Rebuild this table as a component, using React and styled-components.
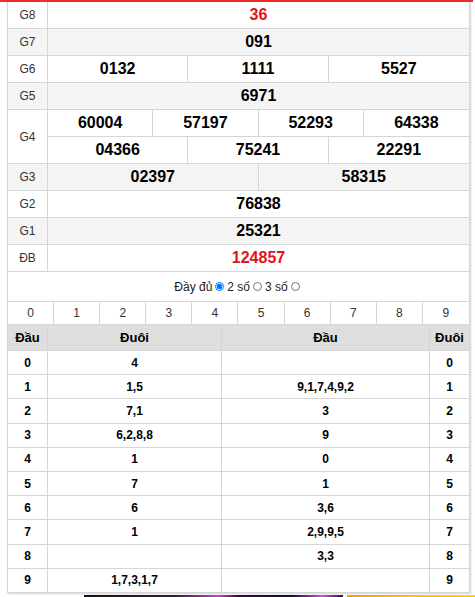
import React from 'react';
import styled, { createGlobalStyle } from 'styled-components';

const GlobalStyle = createGlobalStyle`
  html, body { margin: 0; padding: 0; background: #fff; }
  body { font-family: Arial, "Liberation Sans", Helvetica, sans-serif; color: #000; }
`;

const line = '#d6d6d6';

const TopBar = styled.div`
  height: 2px;
  margin-right: 2px;
  background: #ee2a2a;`

const Card = styled.div`
  margin-left: 7px;
  width: 463px;
  box-sizing: border-box;
  border-left: 1px solid ${line};
  border-right: 1px solid ${line};
  box-shadow: 1px 1px 2px rgba(0, 0, 0, 0.18);`

const Prizes = styled.div`
  display: grid;
  grid-template-columns: 40px 1fr;`

const Label = styled.div`
  grid-row: span ${p => p.$span || 1};
  display: flex;
  align-items: center;
  justify-content: center;
  background: ${p => (p.$alt ? '#f4f4f4' : '#fff')};
  border-right: 1px solid ${line};
  border-bottom: 1px solid ${line};
  font-size: 12px;
  color: #333;`

const ValueRow = styled.div`
  display: grid;
  grid-template-columns: repeat(${p => p.$cols}, 1fr);
  background: ${p => (p.$alt ? '#f4f4f4' : '#fff')};`

const Num = styled.div`
  height: 26px;
  display: flex;
  align-items: center;
  justify-content: center;
  border-bottom: 1px solid ${line};
  border-right: 1px solid ${line};
  font-size: 16px;
  font-weight: bold;
  color: ${p => (p.$red ? '#e3131c' : '#000')};
  &:last-child { border-right: none; }`

const Options = styled.div`
  height: 29px;
  display: flex;
  align-items: center;
  justify-content: center;
  font-size: 12px;
  color: #222;
  border-bottom: 1px solid ${line};`

const Radio = styled.input`
  width: 9px;
  height: 9px;
  margin: 0 3px 0 3px;`

const Digits = styled.div`
  display: grid;
  grid-template-columns: repeat(10, 1fr);`

const Digit = styled.div`
  height: 22px;
  display: flex;
  align-items: center;
  justify-content: center;
  border-right: 1px solid ${line};
  border-bottom: 1px solid ${line};
  font-size: 12px;
  color: #333;
  &:last-child { border-right: none; }`

const Loto = styled.div`
  display: grid;
  grid-template-columns: 40px 174px 208px 1fr;`

const Cell = styled.div`
  height: ${p => (p.$head ? '25px' : '23.2px')};
  display: flex;
  align-items: center;
  justify-content: center;
  background: ${p => (p.$head ? '#dedede' : '#fff')};
  border-right: 1px solid ${line};
  border-bottom: 1px solid ${line};
  font-size: ${p => (p.$head ? '13px' : '12px')};
  font-weight: bold;
  &:nth-child(4n) { border-right: none; }`

const Ads = styled.div`
  display: flex;
  gap: 4px;
  height: 3px;
  margin-top: 2px;
  padding-left: 84px;`

const Ad = styled.div`
  flex: ${p => p.$flex};
  background: ${p => p.$bg};`

const prizes = [
  { name: 'G8', rows: [['36']], red: true },
  { name: 'G7', rows: [['091']] },
  { name: 'G6', rows: [['0132', '1111', '5527']] },
  { name: 'G5', rows: [['6971']] },
  { name: 'G4', rows: [['60004', '57197', '52293', '64338'], ['04366', '75241', '22291']] },
  { name: 'G3', rows: [['02397', '58315']] },
  { name: 'G2', rows: [['76838']] },
  { name: 'G1', rows: [['25321']] },
  { name: 'ĐB', rows: [['124857']], red: true },
];

const loto = [
  ['4', ''], ['1,5', '9,1,7,4,9,2'], ['7,1', '3'], ['6,2,8,8', '9'], ['1', '0'],
  ['7', '1'], ['6', '3,6'], ['1', '2,9,9,5'], ['', '3,3'], ['1,7,3,1,7', ''],
];

export default function App() {
  return (
    <>
      <GlobalStyle />
      <TopBar />
      <Card>
        <Prizes>
          {prizes.map((p, i) => (
            <React.Fragment key={p.name}>
              <Label $span={p.rows.length} $alt={i % 2 === 1}>{p.name}</Label>
              {p.rows.map((r, j) => (
                <ValueRow key={j} $cols={r.length} $alt={i % 2 === 1}>
                  {r.map(n => <Num key={n} $red={p.red}>{n}</Num>)}
                </ValueRow>
              ))}
            </React.Fragment>
          ))}
        </Prizes>
        <Options>
          Đầy đủ<Radio type="radio" name="mode" defaultChecked />
          2 số<Radio type="radio" name="mode" />
          3 số<Radio type="radio" name="mode" />
        </Options>
        <Digits>
          {[0, 1, 2, 3, 4, 5, 6, 7, 8, 9].map(d => <Digit key={d}>{d}</Digit>)}
        </Digits>
        <Loto>
          <Cell $head>Đầu</Cell>
          <Cell $head>Đuôi</Cell>
          <Cell $head>Đầu</Cell>
          <Cell $head>Đuôi</Cell>
          {loto.map((r, i) => (
            <React.Fragment key={i}>
              <Cell>{i}</Cell>
              <Cell>{r[0]}</Cell>
              <Cell>{r[1]}</Cell>
              <Cell>{i}</Cell>
            </React.Fragment>
          ))}
        </Loto>
      </Card>
      <Ads>
        <Ad $flex="0 0 259px" $bg="linear-gradient(90deg, #141018, #2a2035 35%, #d040c8 52%, #2a0a3a 60%, #1a0828 80%, #d050d0 92%, #3a1048)" />
        <Ad $flex="1" $bg="linear-gradient(90deg, #f5a000, #ffc800 60%, #ffd800)" />
      </Ads>
    </>
  );
}
